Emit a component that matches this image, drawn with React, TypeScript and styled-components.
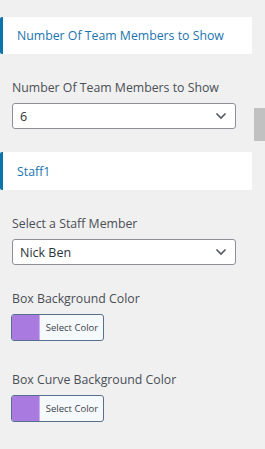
import React from "react";
import styled, { createGlobalStyle } from "styled-components";

const Global = createGlobalStyle`
  html, body { margin: 0; padding: 0; background: #f0f0f0; }
  body { font-family: "Open Sans", "Noto Sans", sans-serif; }
`;

const Page = styled.div`
  position: relative;
  width: 265px;
  height: 449px;
  overflow: hidden;
  padding-top: 17px;
  box-sizing: border-box;
`;

const Column = styled.div`
  width: 252px;
  display: flex;
  flex-direction: column;
`;

const SectionHeader = styled.div<{ $h: number; $mb: number }>`
  height: ${(p) => p.$h}px;
  background: #ffffff;
  border-left: 3px solid #0d73ab;
  border-radius: 2px 0 0 2px;
  display: flex;
  align-items: center;
  padding-left: 14px;
  color: #1b74b0;
  font-size: 12.3px;
  margin-bottom: ${(p) => p.$mb}px;
`;

const Field = styled.div<{ $mb: number }>`
  display: flex;
  flex-direction: column;
  align-items: flex-start;
  padding-left: 12px;
  margin-bottom: ${(p) => p.$mb}px;
`;

const Label = styled.div`
  color: #4a4f55;
  font-size: 12.3px;
  line-height: 18px;
  margin-bottom: 6px;
`;

const Select = styled.div`
  width: 224px;
  height: 26px;
  box-sizing: border-box;
  background: #fff;
  border: 1px solid #8c8f94;
  border-radius: 3px;
  display: flex;
  align-items: center;
  justify-content: space-between;
  padding: 0 8px 0 7px;
  color: #2c3338;
  font-size: 12.5px;
`;

const ColorButton = styled.div`
  margin-left: -1px;
  width: 93px;
  height: 27px;
  box-sizing: border-box;
  border: 1px solid #566f8c;
  border-radius: 3px;
  display: flex;
  overflow: hidden;
  background: #f5f9fc;
`;

const Swatch = styled.div`
  width: 27px;
  background: #a97be0;
  border-right: 1px solid #c9b2ea;
`;

const ButtonText = styled.div`
  flex: 1;
  display: flex;
  align-items: center;
  justify-content: center;
  font-size: 9.5px;
  color: #3c434a;
  padding-left: 1px;
`;

const ScrollThumb = styled.div`
  position: absolute;
  left: 254px;
  top: 108px;
  width: 11px;
  height: 33px;
  background: #c1c1c1;
`;

const Chevron = () => (
  <svg width="12" height="8" viewBox="0 0 12 8">
    <path d="M1.5 1.5 L6 6 L10.5 1.5" fill="none" stroke="#50575e" strokeWidth="1.6" />
  </svg>
);

export default function App() {
  return (
    <>
      <Global />
      <Page>
        <Column>
          <SectionHeader $h={37} $mb={25}>Number Of Team Members to Show</SectionHeader>
          <Field $mb={23}>
            <Label>Number Of Team Members to Show</Label>
            <Select>
              <span>6</span>
              <Chevron />
            </Select>
          </Field>
          <SectionHeader $h={38} $mb={25}>Staff1</SectionHeader>
          <Field $mb={25}>
            <Label>Select a Staff Member</Label>
            <Select>
              <span>Nick Ben</span>
              <Chevron />
            </Select>
          </Field>
          <Field $mb={30}>
            <Label>Box Background Color</Label>
            <ColorButton>
              <Swatch />
              <ButtonText>Select Color</ButtonText>
            </ColorButton>
          </Field>
          <Field $mb={0}>
            <Label>Box Curve Background Color</Label>
            <ColorButton>
              <Swatch />
              <ButtonText>Select Color</ButtonText>
            </ColorButton>
          </Field>
        </Column>
        <ScrollThumb />
      </Page>
    </>
  );
}
